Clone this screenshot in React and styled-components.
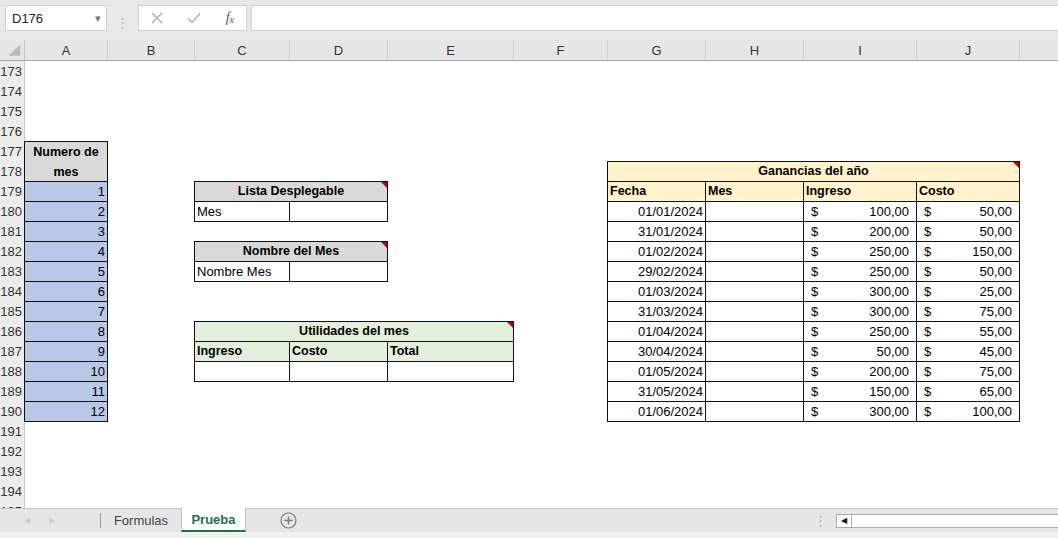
import React from "react";
import styled, { createGlobalStyle } from "styled-components";

const FONT = `"Liberation Sans", Arial, sans-serif`;

// anchos de columna como en la hoja (px)
const COLS = [
  ["A", 83],
  ["B", 87],
  ["C", 95],
  ["D", 98],
  ["E", 126],
  ["F", 94],
  ["G", 98],
  ["H", 98],
  ["I", 113],
  ["J", 103],
  ["K", 120],
];
const colIndex = (id) => COLS.findIndex((c) => c[0] === id);
const TEMPLATE = `25px ${COLS.map((c) => c[1] + "px").join(" ")}`;
const FIRST_ROW = 173;
const ROWS = Array.from({ length: 23 }, (_, i) => FIRST_ROW + i);

const ganancias = [
  ["01/01/2024", "100,00", "50,00"],
  ["31/01/2024", "200,00", "50,00"],
  ["01/02/2024", "250,00", "150,00"],
  ["29/02/2024", "250,00", "50,00"],
  ["01/03/2024", "300,00", "25,00"],
  ["31/03/2024", "300,00", "75,00"],
  ["01/04/2024", "250,00", "55,00"],
  ["30/04/2024", "50,00", "45,00"],
  ["01/05/2024", "200,00", "75,00"],
  ["31/05/2024", "150,00", "65,00"],
  ["01/06/2024", "300,00", "100,00"],
];

const GlobalStyle = createGlobalStyle`
  html, body {
    margin: 0;
    padding: 0;
    background: #ffffff;
    overflow: hidden;
  }
  body {
    font-family: ${FONT};
  }
`;

function SheetTable({ from, to, row, rows, children }) {
  const a = colIndex(from);
  const b = colIndex(to);
  const widths = COLS.slice(a, b + 1).map((c) => c[1]);
  const total = widths.reduce((s, w) => s + w, 0);
  return (
    <Table
      $col={`${a + 2} / span ${b - a + 1}`}
      $row={`${row - FIRST_ROW + 1} / span ${rows}`}
      $cols={widths.map((w) => `${w - 1}px`).join(" ")}
      $w={total + 1}
      $h={rows * 20 + 1}
    >
      {children}
    </Table>
  );
}

function Money({ value }) {
  return (
    <MoneyCell>
      <span>$</span>
      <span>{value}</span>
    </MoneyCell>
  );
}

export default function App() {
  return (
    <>
      <GlobalStyle />
      <Window>
        <FormulaBar>
          <NameBox>
            <span>D176</span>
            <DropArrow>▾</DropArrow>
          </NameBox>
          <Grip>⋮</Grip>
          <FxButtons>
            <svg width="12" height="12" viewBox="0 0 12 12">
              <path d="M1 1 L11 11 M11 1 L1 11" stroke="#a8a8a8" strokeWidth="1.2" fill="none" />
            </svg>
            <svg width="14" height="12" viewBox="0 0 14 12">
              <path d="M1 6.5 L5 10.5 L13 1.5" stroke="#a8a8a8" strokeWidth="1.2" fill="none" />
            </svg>
            <FxLabel>
              f<sub>x</sub>
            </FxLabel>
          </FxButtons>
          <FormulaInput />
        </FormulaBar>

        <ColumnHeader>
          <Corner>
            <svg width="25" height="20" viewBox="0 0 25 20">
              <polygon points="21,4 21,16 9,16" fill="#b9b9b9" />
            </svg>
          </Corner>
          {COLS.map(([id]) => (
            <ColLetter key={id}>{id}</ColLetter>
          ))}
        </ColumnHeader>

        <Sheet>
          {ROWS.map((n, i) => (
            <RowNumber key={n} style={{ gridRow: i + 1 }}>
              {n}
            </RowNumber>
          ))}

          {/* Numero de mes */}
          <SheetTable from="A" to="A" row={177} rows={14}>
            <Cell $fill="#d9d9d9" $bold $align="center" $rowSpan={2} $wrap>
              Numero de
              <br />
              mes
            </Cell>
            {Array.from({ length: 12 }, (_, i) => (
              <Cell key={i} $fill="#b8c8e6" $align="right">
                {i + 1}
              </Cell>
            ))}
          </SheetTable>

          {/* Lista desplegable */}
          <SheetTable from="C" to="D" row={179} rows={2}>
            <Cell $fill="#d9d9d9" $bold $align="center" $span={2} $note>
              Lista Desplegable
            </Cell>
            <Cell>Mes</Cell>
            <Cell />
          </SheetTable>

          {/* Nombre del mes */}
          <SheetTable from="C" to="D" row={182} rows={2}>
            <Cell $fill="#d9d9d9" $bold $align="center" $span={2} $note>
              Nombre del Mes
            </Cell>
            <Cell>Nombre Mes</Cell>
            <Cell />
          </SheetTable>

          {/* Utilidades del mes */}
          <SheetTable from="C" to="E" row={186} rows={3}>
            <Cell $fill="#e2efda" $bold $align="center" $span={3} $note>
              Utilidades del mes
            </Cell>
            <Cell $fill="#e2efda" $bold>Ingreso</Cell>
            <Cell $fill="#e2efda" $bold>Costo</Cell>
            <Cell $fill="#e2efda" $bold>Total</Cell>
            <Cell />
            <Cell />
            <Cell />
          </SheetTable>

          {/* Ganancias del año */}
          <SheetTable from="G" to="J" row={178} rows={13}>
            <Cell $fill="#fff2cc" $bold $align="center" $span={4} $note>
              Ganancias del año
            </Cell>
            <Cell $fill="#fff2cc" $bold>Fecha</Cell>
            <Cell $fill="#fff2cc" $bold>Mes</Cell>
            <Cell $fill="#fff2cc" $bold>Ingreso</Cell>
            <Cell $fill="#fff2cc" $bold>Costo</Cell>
            {ganancias.map(([fecha, ingreso, costo]) => (
              <React.Fragment key={fecha}>
                <Cell $align="right">{fecha}</Cell>
                <Cell />
                <Money value={ingreso} />
                <Money value={costo} />
              </React.Fragment>
            ))}
          </SheetTable>
        </Sheet>

        <TabBar>
          <TabNav>
            <NavArrow>◀</NavArrow>
            <NavArrow>▶</NavArrow>
          </TabNav>
          <TabDivider />
          <Tab>Formulas</Tab>
          <Tab $active>Prueba</Tab>
          <AddSheet>
            <svg width="17" height="17" viewBox="0 0 17 17">
              <circle cx="8.5" cy="8.5" r="7.5" stroke="#7a7a7a" strokeWidth="1.2" fill="none" />
              <path d="M8.5 4.5 V12.5 M4.5 8.5 H12.5" stroke="#7a7a7a" strokeWidth="1.4" />
            </svg>
          </AddSheet>
          <Spacer />
          <Grip>⋮</Grip>
          <HScroll>
            <ScrollArrow>◀</ScrollArrow>
          </HScroll>
        </TabBar>
        <StatusStrip />
      </Window>
    </>
  );
}

const Window = styled.div`
  width: 1058px;
  height: 538px;
  display: flex;
  flex-direction: column;
  background: #ffffff;
  overflow: hidden;
`;

const FormulaBar = styled.div`
  height: 40px;
  flex-shrink: 0;
  box-sizing: border-box;
  background: #e8e8e8;
  display: flex;
  align-items: flex-start;
  padding: 5px 0 0 5px;
`;

const NameBox = styled.div`
  width: 102px;
  height: 26px;
  box-sizing: border-box;
  background: #ffffff;
  border: 1px solid #cfcfcf;
  display: flex;
  align-items: center;
  justify-content: space-between;
  padding: 0 5px 0 6px;
  font-size: 13px;
  color: #222;
`;

const DropArrow = styled.span`
  font-size: 11px;
  color: #777;
`;

const Grip = styled.div`
  width: 31px;
  height: 23px;
  align-self: center;
  display: flex;
  align-items: center;
  justify-content: center;
  color: #b0b0b0;
  font-size: 13px;
`;

const FxButtons = styled.div`
  width: 109px;
  height: 26px;
  box-sizing: border-box;
  background: #ffffff;
  border: 1px solid #cfcfcf;
  display: flex;
  align-items: center;
  justify-content: space-between;
  padding: 0 12px 0 12px;
`;

const FxLabel = styled.span`
  font-family: "Liberation Serif", serif;
  font-style: italic;
  font-size: 14px;
  color: #555;
  sub {
    font-size: 10px;
    vertical-align: -1px;
  }
`;

const FormulaInput = styled.div`
  flex: 1;
  height: 26px;
  margin-left: 4px;
  box-sizing: border-box;
  background: #ffffff;
  border: 1px solid #cfcfcf;
  border-right: none;
`;

const ColumnHeader = styled.div`
  height: 21px;
  flex-shrink: 0;
  box-sizing: border-box;
  display: grid;
  grid-template-columns: ${TEMPLATE};
  background: #e6e6e6;
  border-bottom: 1px solid #a9a9a9;
`;

const Corner = styled.div`
  border-right: 1px solid #c8c8c8;
  display: flex;
`;

const ColLetter = styled.div`
  border-right: 1px solid #cfcfcf;
  display: flex;
  align-items: center;
  justify-content: center;
  font-size: 13px;
  color: #333;
`;

const Sheet = styled.div`
  height: 447px;
  flex-shrink: 0;
  display: grid;
  grid-template-columns: ${TEMPLATE};
  grid-template-rows: repeat(${ROWS.length}, 20px);
  overflow: hidden;
`;

const RowNumber = styled.div`
  grid-column: 1;
  background: #ececec;
  border-right: 1px solid #c6c6c6;
  display: flex;
  align-items: center;
  justify-content: flex-end;
  padding-right: 2px;
  font-size: 13px;
  color: #333;
`;

const Table = styled.div`
  grid-column: ${(p) => p.$col};
  grid-row: ${(p) => p.$row};
  justify-self: start;
  align-self: start;
  width: ${(p) => p.$w}px;
  height: ${(p) => p.$h}px;
  margin-left: -1px;
  box-sizing: border-box;
  display: grid;
  grid-template-columns: ${(p) => p.$cols};
  grid-auto-rows: 19px;
  gap: 1px;
  padding: 1px;
  background: #111;
  z-index: 1;
`;

const Cell = styled.div`
  position: relative;
  grid-column: ${(p) => (p.$span ? `span ${p.$span}` : "auto")};
  grid-row: ${(p) => (p.$rowSpan ? `span ${p.$rowSpan}` : "auto")};
  background: ${(p) => p.$fill || "#ffffff"};
  font-size: ${(p) => (p.$bold ? "12.5px" : "13px")};
  font-weight: ${(p) => (p.$bold ? 700 : 400)};
  text-align: ${(p) => p.$align || "left"};
  line-height: ${(p) => (p.$wrap ? "20px" : "19px")};
  padding: 0 2px;
  color: #000;
  white-space: nowrap;
  overflow: hidden;

  ${(p) =>
    p.$note &&
    `
    &::after {
      content: "";
      position: absolute;
      top: 0;
      right: 0;
      border-top: 6px solid #c0001a;
      border-left: 6px solid transparent;
    }
  `}
`;

const MoneyCell = styled.div`
  background: #ffffff;
  display: flex;
  justify-content: space-between;
  align-items: center;
  padding: 0 7px 0 7px;
  font-size: 13px;
  color: #000;
`;

const TabBar = styled.div`
  height: 24px;
  flex-shrink: 0;
  box-sizing: border-box;
  background: #e6e6e6;
  border-top: 1px solid #c4c4c4;
  display: flex;
  align-items: stretch;
`;

const TabNav = styled.div`
  width: 100px;
  display: flex;
  align-items: center;
  padding-left: 24px;
  gap: 19px;
  box-sizing: border-box;
`;

const NavArrow = styled.span`
  font-size: 8px;
  color: #cacaca;
`;

const TabDivider = styled.div`
  width: 1px;
  margin: 4px 0;
  background: #9a9a9a;
`;

const Tab = styled.div`
  width: ${(p) => (p.$active ? "65px" : "80px")};
  box-sizing: border-box;
  display: flex;
  align-items: center;
  justify-content: center;
  font-size: 13px;
  font-weight: ${(p) => (p.$active ? 700 : 400)};
  color: ${(p) => (p.$active ? "#217346" : "#444")};
  background: ${(p) => (p.$active ? "#ffffff" : "transparent")};
  border-left: ${(p) => (p.$active ? "1px solid #c4c4c4" : "none")};
  border-right: ${(p) => (p.$active ? "1px solid #c4c4c4" : "none")};
  border-bottom: ${(p) => (p.$active ? "2px solid #217346" : "none")};
  margin-top: -1px;
`;

const AddSheet = styled.div`
  width: 84px;
  display: flex;
  align-items: center;
  justify-content: center;
`;

const Spacer = styled.div`
  flex: 1;
`;

const HScroll = styled.div`
  width: 222px;
  height: 14px;
  align-self: center;
  box-sizing: border-box;
  background: #ffffff;
  border: 1px solid #ababab;
  border-right: none;
  display: flex;
`;

const ScrollArrow = styled.div`
  width: 14px;
  border-right: 1px solid #ababab;
  display: flex;
  align-items: center;
  justify-content: center;
  font-size: 8px;
  color: #111;
`;

const StatusStrip = styled.div`
  flex: 1;
  background: #f0f0f0;
`;
